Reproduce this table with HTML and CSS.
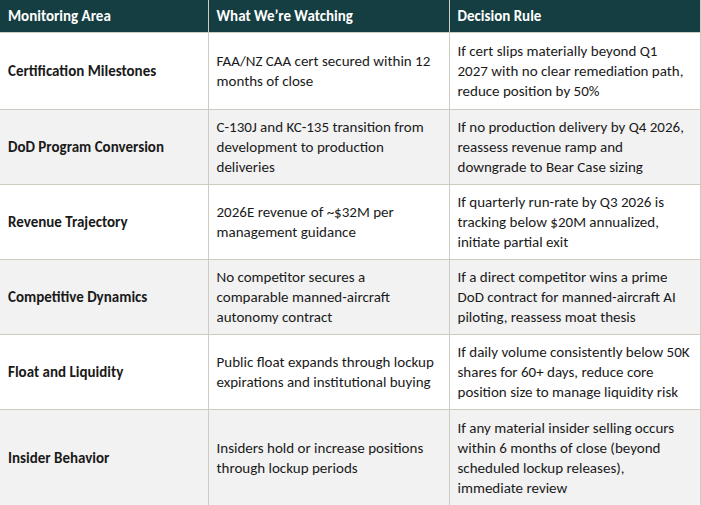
FILE: index.html
```html
<!DOCTYPE html>
<html>
<head>
<meta charset="utf-8">
<link rel="stylesheet" href="styles.css">
</head>
<body>
<table class="grid">
  <colgroup>
    <col class="c1"><col class="c2"><col class="c3">
  </colgroup>
  <thead>
    <tr><th>Monitoring Area</th><th>What We’re Watching</th><th>Decision Rule</th></tr>
  </thead>
  <tbody>
    <tr class="first">
      <td class="area">Certification Milestones</td>
      <td>FAA/NZ CAA cert secured within 12<br>months of close</td>
      <td>If cert slips materially beyond Q1<br>2027 with no clear remediation path,<br>reduce position by 50%</td>
    </tr>
    <tr class="alt">
      <td class="area">DoD Program Conversion</td>
      <td>C-130J and KC-135 transition from<br>development to production<br>deliveries</td>
      <td>If no production delivery by Q4 2026,<br>reassess revenue ramp and<br>downgrade to Bear Case sizing</td>
    </tr>
    <tr>
      <td class="area">Revenue Trajectory</td>
      <td>2026E revenue of ~$32M per<br>management guidance</td>
      <td>If quarterly run-rate by Q3 2026 is<br>tracking below $20M annualized,<br>initiate partial exit</td>
    </tr>
    <tr class="alt">
      <td class="area">Competitive Dynamics</td>
      <td>No competitor secures a<br>comparable manned-aircraft<br>autonomy contract</td>
      <td>If a direct competitor wins a prime<br>DoD contract for manned-aircraft AI<br>piloting, reassess moat thesis</td>
    </tr>
    <tr>
      <td class="area">Float and Liquidity</td>
      <td>Public float expands through lockup<br>expirations and institutional buying</td>
      <td>If daily volume consistently below 50K<br>shares for 60+ days, reduce core<br>position size to manage liquidity risk</td>
    </tr>
    <tr class="alt last">
      <td class="area">Insider Behavior</td>
      <td>Insiders hold or increase positions<br>through lockup periods</td>
      <td>If any material insider selling occurs<br>within 6 months of close (beyond<br>scheduled lockup releases),<br>immediate review</td>
    </tr>
  </tbody>
</table>
</body>
</html>
```

FILE: styles.css
```css
html, body {
  margin: 0;
  padding: 0;
  background: #ffffff;
}
body {
  font-family: Carlito, Lato, "Liberation Sans", sans-serif;
  font-size: 15px;
  color: #1a1a1a;
}
.grid {
  border-collapse: collapse;
  table-layout: fixed;
  width: 700px;
}
.c1 { width: 208px; }
.c2 { width: 241px; }
.c3 { width: 251px; }
.grid th {
  background: #153e42;
  color: #ffffff;
  font-weight: 700;
  text-align: left;
  height: 32px;
  padding: 0 8px;
  border-left: 1px solid #cfcbc3;
  border-right: 1px solid #cfcbc3;
  box-sizing: border-box;
  line-height: 20px;
}
.grid th:first-child { border-left: none; padding-left: 8px; }
.grid td {
  border: 1px solid #cfcbc3;
  padding: 7px 8px;
  line-height: 20px;
  vertical-align: middle;
  white-space: nowrap;
}
.grid tr.first td { padding-top: 8px; padding-bottom: 8px; }
.grid tr.last td { padding-top: 8px; padding-bottom: 12px; }
.grid td:first-child { border-left: none; }
.grid .area { font-weight: 700; }
.grid tr.alt td { background: #f2f2f2; }
```
